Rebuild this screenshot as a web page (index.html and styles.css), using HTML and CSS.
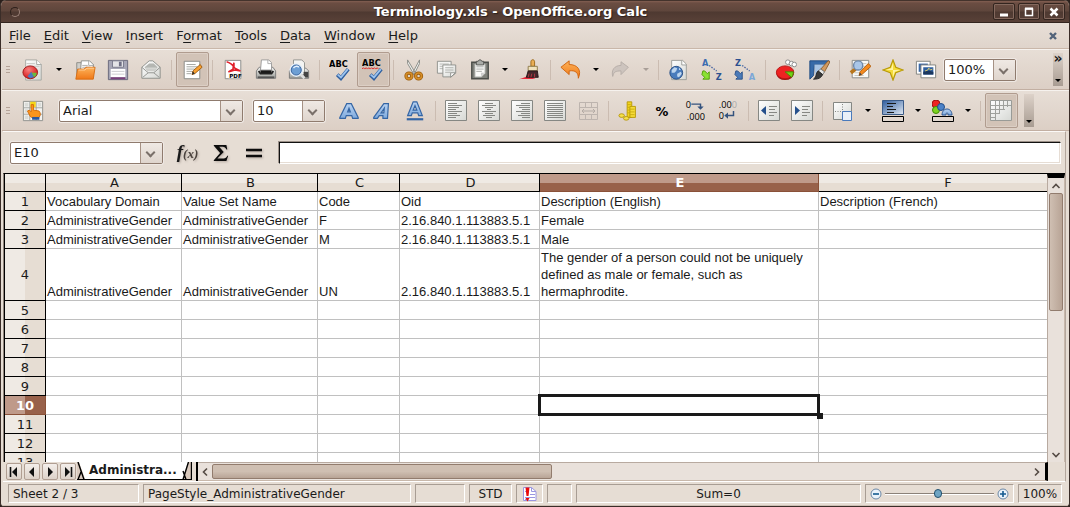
FILE: index.html
```html
<!DOCTYPE html>
<html lang="en">
<head>
<meta charset="utf-8">
<title>Terminology.xls - OpenOffice.org Calc</title>
<link rel="stylesheet" href="styles.css">
</head>
<body>
<svg class="defs" aria-hidden="true">
  <defs>
    <linearGradient id="paper" x1="0" y1="0" x2="1" y2="1"><stop offset="0" stop-color="#ffffff"/><stop offset="1" stop-color="#d6d8d4"/></linearGradient>
    <linearGradient id="blue" x1="0" y1="0" x2="0" y2="1"><stop offset="0" stop-color="#b9d3f2"/><stop offset="1" stop-color="#7faadd"/></linearGradient>
    <linearGradient id="orange" x1="0" y1="0" x2="0" y2="1"><stop offset="0" stop-color="#fdb35a"/><stop offset="1" stop-color="#f07818"/></linearGradient>
    <linearGradient id="navy" x1="0" y1="0" x2="1" y2="1"><stop offset="0" stop-color="#2c5a9c"/><stop offset="1" stop-color="#e4ecf5"/></linearGradient>
    <linearGradient id="metal" x1="0" y1="0" x2="0" y2="1"><stop offset="0" stop-color="#f4f4f2"/><stop offset="1" stop-color="#9a9c98"/></linearGradient>
    <radialGradient id="red" cx=".4" cy=".3" r=".7"><stop offset="0" stop-color="#f98080"/><stop offset="1" stop-color="#d31616"/></radialGradient>
  </defs>
</svg>
<div class="window">
  <header class="titlebar">
    <button class="winmenu" aria-label="Window menu"></button>
    <h1>Terminology.xls - OpenOffice.org Calc</h1>
    <div class="winbuttons">
      <button aria-label="Minimize"><svg width="12" height="12"><path d="M2 9h8" stroke="#fff" stroke-width="3"/></svg></button>
      <button aria-label="Maximize"><svg width="12" height="12"><path d="M2.500 3h7v6.500h-7z" fill="none" stroke="#fff" stroke-width="1.500"/><path d="M2 2.500h8" stroke="#fff" stroke-width="2"/></svg></button>
      <button aria-label="Close"><svg width="12" height="12"><path d="M2.500 2.500l7 7m0-7l-7 7" stroke="#fff" stroke-width="2.500"/></svg></button>
    </div>
  </header>

  <nav class="menubar">
    <button><u>F</u>ile</button><button><u>E</u>dit</button><button><u>V</u>iew</button><button><u>I</u>nsert</button><button>F<u>o</u>rmat</button><button><u>T</u>ools</button><button><u>D</u>ata</button><button><u>W</u>indow</button><button><u>H</u>elp</button>
    <button class="closedoc" aria-label="Close document"><svg width="10" height="10"><path d="M2 2l6 6m0-6l-6 6" stroke="#52637a" stroke-width="2.400"/></svg></button>
  </nav>

  <div class="toolbar standard" role="toolbar" aria-label="Standard">
    <span class="grip"></span>
    <button class="tool" aria-label="New"><svg class="ic" viewBox="0 0 24 24"><path d="M4 1h12l5 5v17H4z" fill="url(#paper)" stroke="#a4a6a2"/><path d="M16 1v5h5" fill="#fff" stroke="#a4a6a2"/><path d="M5 5h9M5 8h14" stroke="#c4c6c2"/><ellipse cx="9" cy="14.500" rx="8" ry="7" fill="url(#red)" stroke="#a01818"/><path d="M10 15h6c0 3-1 4-3 5z" fill="#6cba3c"/><path d="M10 14l3 6-4 1-3-2z" fill="#4a78c0"/></svg></button>
    <button class="drop wide" aria-label="New document type"></button>
    <button class="tool" aria-label="Open"><svg class="ic" viewBox="0 0 24 24"><path d="M3 4h5l1 2h12v15H3z" fill="#cfcfcb" stroke="#8a8a86"/><path d="M8 2h9l4 4v9H7z" fill="#fff" stroke="#8a8c88"/><path d="M16 2v5h5M9 7h6M9 9h9" fill="none" stroke="#a8aaa6"/><path d="M4 11h7l2-2h10l-2 13H2z" fill="url(#orange)" stroke="#d86c12"/><path d="M5 12h7l2-2h8" fill="none" stroke="#ffd09a"/></svg></button>
    <button class="tool" aria-label="Save"><svg class="ic" viewBox="0 0 24 24"><path d="M1.500 1.500h21v21h-21z" fill="#a6a6b6" stroke="#666678"/><path d="M4 11h16v9H4z" fill="#fff"/><path d="M5 13.500h14M5 16.500h14" stroke="#c8c8cc"/><path d="M6 2h12v7H6z" fill="#e4e4e8" stroke="#77778a"/><path d="M13 3h3v5h-3z" fill="#6e6e84"/><path d="M4 20h16v2H4z" fill="#79407a"/></svg></button>
    <button class="tool" aria-label="Document as E-mail"><svg class="ic" viewBox="0 0 24 24"><path d="M2 9l8-7h4l8 7v12H2z" fill="url(#paper)" stroke="#8a8c88"/><path d="M5 9l5-4h5l4 4-3 4H8z" fill="#b4b6b2"/><path d="M2 9l7 6h6l7-6M3 20l6-5m12 5l-6-5" fill="none" stroke="#8f918d"/><path d="M6 10h12M7 12h10" stroke="#e9e9e7"/></svg></button>
    <span class="sep"></span>
    <button class="tool pressed" aria-label="Edit File"><svg class="ic" viewBox="0 0 24 24"><path d="M3.500 2.500h17v19h-17z" fill="#fff" stroke="#858783"/><path d="M6 6h10M6 8.500h12M6 11h9M6 13.500h6M6 16h5" stroke="#a0a29e"/><path d="M12 17l1-4 8-7 2 3-8 7z" fill="#f8a030" stroke="#9c5b10"/><path d="M12 17l1-4 2 3z" fill="#333"/></svg></button>
    <span class="sep"></span>
    <button class="tool" aria-label="Export as PDF"><svg class="ic" viewBox="0 0 24 24"><path d="M3.500 1.500h17v20h-17z" fill="#fff" stroke="#858783"/><path d="M5 3c4 1 7 4 9 7l6 3-6-1-7 2 5-3 1-7 0 6" fill="none" stroke="#e0202a" stroke-width="1.800"/><path d="M7 15h13v6H7z" fill="#f6f6f4"/><text x="8" y="21" font-size="6" font-weight="700">PDF</text></svg></button>
    <button class="tool" aria-label="Print"><svg class="ic" viewBox="0 0 24 24"><path d="M1.500 13l3-4h15l3 4v8h-21z" fill="url(#metal)" stroke="#777"/><path d="M6 10h12v6H6z" fill="#181818"/><path d="M7 1h8l3 3v8H6z" fill="#fff" stroke="#999"/><path d="M14 1v4h4" fill="none" stroke="#aaa"/><path d="M4 13l2 3h12l2-3" fill="none" stroke="#222" stroke-width="2"/><path d="M3 20h18" stroke="#555" stroke-width="2"/></svg></button>
    <button class="tool" aria-label="Page Preview"><svg class="ic" viewBox="0 0 24 24"><path d="M1.500 13l3-3h15l3 3v8h-21z" fill="url(#metal)" stroke="#777"/><path d="M6 1h9l3 3v13H6z" fill="#f4f4f2" stroke="#8e908c"/><path d="M17 14h5v6h-5z" fill="#444"/><circle cx="9" cy="12" r="6.500" fill="#a9cbea" stroke="#e4eef8" stroke-width="2"/><circle cx="9" cy="12" r="5.500" fill="#6d9fd4" stroke="#37609a"/><path d="M6 10c1-2 4-3 6-1" fill="none" stroke="#e6f2ff" stroke-width="1.500"/><path d="M14 17l4 4" stroke="#ddd" stroke-width="3"/></svg></button>
    <span class="sep"></span>
    <button class="tool" aria-label="Spellcheck"><svg class="ic" viewBox="0 0 24 24"><text x="0" y="9" font-size="9" font-weight="700">ABC</text><path d="M9 17l4 4 8-10" fill="none" stroke="#2f5f9f" stroke-width="4"/><path d="M9.500 17l3.500 3 7.500-9" fill="none" stroke="#9cc3ee" stroke-width="2"/></svg></button>
    <button class="tool pressed" aria-label="AutoSpellcheck"><svg class="ic" viewBox="0 0 24 24"><text x="0" y="8" font-size="9" font-weight="700">ABC</text><path d="M0 11l1.500-1.500L3 11l1.500-1.500L6 11l1.500-1.500L9 11l1.500-1.500L12 11l1.500-1.500L15 11l1.500-1.500L18 11" fill="none" stroke="#e02020"/><path d="M9 17l4 4 8-10" fill="none" stroke="#2f5f9f" stroke-width="4"/><path d="M9.500 17l3.500 3 7.500-9" fill="none" stroke="#9cc3ee" stroke-width="2"/></svg></button>
    <span class="sep"></span>
    <button class="tool" aria-label="Cut"><svg class="ic" viewBox="0 0 24 24"><path d="M5 1l9 15-2 1L5 5zM18 1l-8 15 2 1 6-12z" fill="#eceeea" stroke="#888a86"/><ellipse cx="6.500" cy="18.500" rx="3.200" ry="3.200" fill="none" stroke="#9a5c0c" stroke-width="3.600"/><ellipse cx="17" cy="18.500" rx="3.200" ry="3.200" fill="none" stroke="#9a5c0c" stroke-width="3.600"/><circle cx="6.500" cy="18.500" r="3.200" fill="none" stroke="#d58d28" stroke-width="1.800"/><circle cx="17" cy="18.500" r="3.200" fill="none" stroke="#d58d28" stroke-width="1.800"/></svg></button>
    <button class="tool" aria-label="Copy"><svg class="ic" viewBox="0 0 24 24"><path d="M1.500 2.500h15v13h-15z" fill="#f4f4f2" stroke="#8c8e8a"/><path d="M4 5.500h10M4 8h10M4 10.500h5" stroke="#b4b6b2"/><path d="M7.500 6.500h14v9l-5 4h-9z" fill="url(#paper)" stroke="#8c8e8a"/><path d="M10 9.500h9M10 12h9M10 14.500h6" stroke="#adafab"/><path d="M21 15h-5v5z" fill="#fff" stroke="#8c8e8a"/></svg></button>
    <button class="tool" aria-label="Paste"><svg class="ic" viewBox="0 0 24 24"><path d="M3 3.500h18v18H3z" fill="#7f817b" stroke="#4c4e4a" stroke-width="1.500"/><path d="M6.500 5.500h11v10l-4 4h-7z" fill="#fafaf8" stroke="#b6b8b4"/><path d="M8 8.500h8M8 11h8M8 13.500h6" stroke="#a8aaa6"/><path d="M17 15h-4v4z" fill="#ccc"/><path d="M8 2.500h2l1-1.500h2l1 1.500h2v4H8z" fill="#aaaca8" stroke="#555753"/></svg></button>
    <button class="drop" aria-label="Paste options"></button>
    <button class="tool" aria-label="Format Paintbrush"><svg class="ic" viewBox="0 0 24 24"><path d="M0 22c5-1 8-3 11-4l7 3c-6 2-12 0-18 1z" fill="#e92a3c"/><path d="M13 8V3c0-3 4-3 4 0v5z" fill="#e9ae55" stroke="#9a6818"/><path d="M10 8h10v5H10z" fill="#f0e2bc" stroke="#8b7848"/><path d="M10 13h10l1 7H8z" fill="#43262a" stroke="#241416"/><path d="M11 16l-1 4m4-4l-1 4m4-4v4" stroke="#b33943"/></svg></button>
    <span class="sep"></span>
    <button class="tool" aria-label="Undo"><svg class="ic" viewBox="0 0 24 24"><path d="M1 9l9-7v4c9 0 14 6 10 15 0-6-3-9-10-8v4z" fill="url(#orange)" stroke="#cf620c"/></svg></button>
    <button class="drop" aria-label="Undo list"></button>
    <button class="tool" aria-label="Redo" disabled><svg class="ic" viewBox="0 0 24 24"><path d="M20 9l-8-6v4c-7 0-11 5-9 12 1-5 3-6 9-6v4z" fill="#cdc4be" stroke="#b5aca6"/></svg></button>
    <button class="drop" aria-label="Redo list" disabled></button>
    <span class="sep"></span>
    <button class="tool" aria-label="Hyperlink"><svg class="ic" viewBox="0 0 24 24"><path d="M4 1.500h12l4 4v17H4z" fill="url(#paper)" stroke="#999b97"/><path d="M15 1.500v5h5" fill="#fff" stroke="#999b97"/><circle cx="9" cy="15" r="7" fill="#4a7cbc" stroke="#254c82"/><path d="M4 12l3-3 3 1-1 3-2 2-3 0zM10 16l4-2 1 2-3 4-2-1zM12 9l2 3-2 0z" fill="#bdd5ee"/></svg></button>
    <button class="tool" aria-label="Sort Ascending"><svg class="ic" viewBox="0 0 24 24"><text x="1" y="8" font-size="9" font-weight="700" fill="#3c6cb0">A</text><text x="16" y="23" font-size="9" font-weight="700" fill="#2c5090">Z</text><path d="M9 7l8 6" stroke="#3a5a9c" stroke-width="1.400" stroke-dasharray="1.500 1.500"/><path d="M2 13l2 0 3 3 2-2v8H2l2-2-3-3z" fill="#8ae234" stroke="#4e9a06"/></svg></button>
    <button class="tool" aria-label="Sort Descending"><svg class="ic" viewBox="0 0 24 24"><text x="1" y="8" font-size="9" font-weight="700" fill="#2c5090">Z</text><text x="16" y="23" font-size="9" font-weight="700" fill="#7ba7d8">A</text><path d="M9 7l8 6" stroke="#3a5a9c" stroke-width="1.400" stroke-dasharray="1.500 1.500"/><path d="M2 13l2 0 3 3 2-2v8H2l2-2-3-3z" fill="#4a7ab8" stroke="#2a5088"/></svg></button>
    <span class="sep"></span>
    <button class="tool" aria-label="Chart"><svg class="ic" viewBox="0 0 24 24"><ellipse cx="11" cy="16" rx="9.500" ry="7" fill="#9c1010"/><ellipse cx="11" cy="14.500" rx="9.500" ry="7" fill="#ee2222" stroke="#b51414"/><path d="M11 14h9c0 3-1 5-2 6z" fill="#73d216" stroke="#3f8a06"/><circle cx="14" cy="3.500" r="2.500" fill="#fff" stroke="#888"/><circle cx="18" cy="5" r="2.500" fill="#fff" stroke="#888"/><circle cx="21" cy="6" r="2.500" fill="#fff" stroke="#888"/></svg></button>
    <button class="tool" aria-label="Show Draw Functions"><svg class="ic" viewBox="0 0 24 24"><path d="M2 2h21l-3 4H7l-1 12-4 4z" fill="#376aa8" stroke="#1f4a82"/><path d="M7 6h12L8 18z" fill="#a8c4e4"/><path d="M14 11l8-9 2 1-6 11z" fill="#d29a60" stroke="#8a5c2c"/><path d="M11 13l3-2 4 3-2 3z" fill="#e9e9e7" stroke="#777"/><path d="M11 13l5 4c-2 4-5 5-10 5 4-3 2-6 5-9z" fill="#3a3a3a" stroke="#222"/></svg></button>
    <span class="sep"></span>
    <button class="tool" aria-label="Find &amp; Replace"><svg class="ic" viewBox="0 0 24 24"><path d="M3.500 1.500h18v19h-18z" fill="#f8f8f6" stroke="#858783"/><path d="M6 5h13M6 8h13M6 15h8M6 18h10" stroke="#c2c4c0"/><path d="M7 11l-5 4" stroke="#b8761c" stroke-width="4"/><circle cx="10" cy="7" r="5" fill="#a9c6e8" stroke="#6d87a8" stroke-width="1.500"/><path d="M11 18l1-4 9-9 3 3-10 9z" fill="#f58a1e" stroke="#b05c0a"/><path d="M11 18l1-3 2 2z" fill="#444"/></svg></button>
    <button class="tool" aria-label="Navigator"><svg class="ic" viewBox="0 0 24 24"><path d="M12 1l3 8 8 3-8 3-3 8-3-8-8-3 8-3z" fill="#f5dc3c" stroke="#b89a08" stroke-width="1.300"/><path d="M12 4v8l-8 0 6-2zM12 12l8 0-6 2-2 6z" fill="#fff4a0"/></svg></button>
    <button class="tool" aria-label="Gallery"><svg class="ic" viewBox="0 0 24 24"><path d="M1.500 2.500h15v14h-15z" fill="#fff" stroke="#7d7f7b"/><path d="M4 5h10v9H4z" fill="#3a68a6"/><path d="M6.500 6.500h16v14h-16z" fill="#fff" stroke="#7d7f7b"/><path d="M9 9h11v8H9z" fill="#2d5e9e"/><path d="M9 14c4-2 7-1 11 0v3H9z" fill="#1b375e"/><path d="M11 13l3-1 1-2 2 2 2-1" fill="none" stroke="#e8d36a"/></svg></button>
    <span class="combo zoombox"><select aria-label="Zoom"><option>100%</option></select></span>
    <button class="more" aria-label="More standard tools">»</button>
  </div>

  <div class="toolbar formatting" role="toolbar" aria-label="Formatting">
    <span class="grip"></span>
    <button class="tool" aria-label="Styles and Formatting"><svg class="ic" viewBox="0 0 24 24"><path d="M1.500 1.500h21v21h-21z" fill="#f3f3f1" stroke="#8b8d89"/><path d="M8.500 2v20M15.500 2v20M2 8.500h20M2 15.500h20" stroke="#a0a29e"/><path d="M3 3h4v4H3zM3 10h4v4H3zM3 17h4v4H3zM17 3h4v4h-4z" fill="#d9dbd7"/><path d="M9 2h6v6H9z" fill="#f4d616"/><path d="M9 18l-3-6 2-1 2 2V5h2.500v6l6 1c2 2 2 5 0 7h-8z" fill="#fb951f" stroke="#d46a08"/><path d="M11 18.500h8v3h-8z" fill="#2d58a0"/></svg></button>
    <span class="combo fontbox"><select aria-label="Font Name"><option>Arial</option></select></span>
    <span class="combo sizebox"><select aria-label="Font Size"><option>10</option></select></span>
    <button class="tool" aria-label="Bold"><svg class="ic" viewBox="0 0 24 24"><path d="M2 19L9.500 4h5L22 19v1h-6l-1-3H9l-1 3H2zM10.500 13h3L12 9z" fill="url(#blue)" stroke="#3465a4" stroke-width="1.300" fill-rule="evenodd"/></svg></button>
    <button class="tool" aria-label="Italic"><svg class="ic" viewBox="0 0 24 24"><path d="M3 19L14 4h5l-1 16h-5v-3H9l-2 3H3zM11 14h3l.5-5z" fill="url(#blue)" stroke="#3465a4" stroke-width="1.300" fill-rule="evenodd"/></svg></button>
    <button class="tool" aria-label="Underline"><svg class="ic" viewBox="0 0 24 24"><path d="M4 17l6-15h4l6 15h-4l-1-3H9l-1 3zM10 11h4l-2-5z" fill="url(#blue)" stroke="#3465a4" stroke-width="1.300" fill-rule="evenodd"/><path d="M3 21h18" stroke="#3465a4" stroke-width="2.400"/></svg></button>
    <span class="sep"></span>
    <button class="tool" aria-label="Align Left"><svg class="ic" viewBox="1 1 22 22"><path d="M1.500 1.500h21v20h-21z" fill="url(#paper)" stroke="#858783"/><path d="M4 4.500h9M4 6.500h14M4 8.500h11M4 10.500h8M4 12.500h14M4 14.500h9M4 16.500h12M4 18.500h8" stroke="#858783"/></svg></button>
    <button class="tool" aria-label="Align Center Horizontally"><svg class="ic" viewBox="1 1 22 22"><path d="M1.500 1.500h21v20h-21z" fill="url(#paper)" stroke="#858783"/><path d="M8 4.500h8M5 6.500h14M8 8.500h8M10 10.500h4M5 12.500h14M8 14.500h8M6 16.500h12M9 18.500h6" stroke="#858783"/></svg></button>
    <button class="tool" aria-label="Align Right"><svg class="ic" viewBox="1 1 22 22"><path d="M1.500 1.500h21v20h-21z" fill="url(#paper)" stroke="#858783"/><path d="M11 4.500h9M6 6.500h14M9 8.500h11M12 10.500h8M6 12.500h14M11 14.500h9M8 16.500h12M12 18.500h8" stroke="#858783"/></svg></button>
    <button class="tool" aria-label="Justified"><svg class="ic" viewBox="1 1 22 22"><path d="M1.500 1.500h21v20h-21z" fill="url(#paper)" stroke="#858783"/><path d="M4 4.500h16M4 6.500h16M4 8.500h16M4 10.500h16M4 12.500h16M4 14.500h16M4 16.500h16M4 18.500h16" stroke="#858783"/></svg></button>
    <button class="tool" aria-label="Merge Cells" disabled><svg class="ic" viewBox="1 1 22 22"><path d="M3.500 3.500h18v17h-18zM3 8.500h18M3 15.500h18M9.500 3v5.500M15.500 3v5.500M9.500 15.500V20M15.500 15.500V20" fill="none" stroke="#bdb4ae"/><path d="M6 12h13M8 10l-2 2 2 2m9-4l2 2-2 2" fill="none" stroke="#b3aaa4"/></svg></button>
    <span class="sep"></span>
    <button class="tool" aria-label="Currency"><svg class="ic" viewBox="0 0 24 24"><path d="M10 2h5v17h-5z" fill="#f3d41c" stroke="#b79808"/><path d="M13 7h6v12h-6z" fill="#f6dc38" stroke="#b79808"/><path d="M10 5h4M10 8h3M10 11h3M10 14h3M13 10h5M13 13h5M13 16h5" stroke="#c9ac10"/><ellipse cx="4" cy="17" rx="3" ry="2" fill="#f6e04a" stroke="#b79808"/><ellipse cx="9" cy="20" rx="3" ry="2" fill="#f6e04a" stroke="#b79808"/></svg></button>
    <button class="tool" aria-label="Percent"><svg class="ic" viewBox="0 0 24 24"><text x="5" y="17" font-size="14" font-weight="700" font-family="Liberation Sans, sans-serif">%</text></svg></button>
    <button class="tool" aria-label="Add Decimal Place"><svg class="ic" viewBox="0 0 24 24"><text class="narrow" x="2" y="9" font-size="10">0</text><text class="narrow" x="3" y="22" font-size="10">.000</text><path d="M8 4.500h10v3" fill="none" stroke="#34537e" stroke-width="1.600"/><path d="M14.500 7h7L18 10.500z" fill="#34537e"/></svg></button>
    <button class="tool" aria-label="Delete Decimal Place"><svg class="ic" viewBox="0 0 24 24"><text class="narrow" x="2" y="9" font-size="10">.00<tspan fill="#aaa">0</tspan></text><text class="narrow" x="2" y="21" font-size="10">0</text><path d="M18 12v5H10" fill="none" stroke="#34537e" stroke-width="1.600"/><path d="M12 13.500v7L8 17z" fill="#34537e"/></svg></button>
    <span class="sep"></span>
    <button class="tool" aria-label="Decrease Indent"><svg class="ic" viewBox="1 1 22 22"><path d="M1.500 1.500h21v20h-21z" fill="url(#paper)" stroke="#858783"/><path d="M9 7v9l-5-4.500z" fill="#24508c"/><path d="M12 7.500h8M12 10.500h6M12 13.500h8M12 16.500h5" stroke="#858783"/></svg></button>
    <button class="tool" aria-label="Increase Indent"><svg class="ic" viewBox="1 1 22 22"><path d="M1.500 1.500h21v20h-21z" fill="url(#paper)" stroke="#858783"/><path d="M5 7v9l5-4.500z" fill="#24508c"/><path d="M12 7.500h8M12 10.500h6M12 13.500h8M12 16.500h5" stroke="#858783"/></svg></button>
    <span class="sep"></span>
    <button class="tool" aria-label="Borders"><svg class="ic" viewBox="1 1 22 22"><path d="M2.500 3.500h18v17h-18z" fill="url(#paper)" stroke="#858783"/><path d="M11.500 5v8M4 12.500h8" stroke="#858783" stroke-dasharray="1 1.500"/><path d="M11.500 12.500h9v9h-9z" fill="#e9f0f8" stroke="#4a7abc"/></svg></button>
    <button class="drop" aria-label="Border style"></button>
    <button class="tool" aria-label="Background Color"><svg class="ic" viewBox="1 1 22 22"><path d="M1.500 1.500h21v14h-21z" fill="url(#navy)" stroke="#3a5a86"/><path d="M6 4.500h9M6 7.500h6M6 10.500h9M6 13.500h7" stroke="#181818"/><path d="M1.500 17.500h21v5h-21z" fill="#e1d7cf" stroke="#000"/></svg></button>
    <button class="drop" aria-label="Background colors"></button>
    <button class="tool" aria-label="Font Color"><svg class="ic" viewBox="1 1 22 22"><circle cx="5" cy="5" r="4" fill="#ee2323" stroke="#a01010"/><circle cx="5" cy="11" r="3.500" fill="#7ed321" stroke="#3f8a06"/><circle cx="10" cy="8" r="3.500" fill="#4c82c8" stroke="#234f8a"/><path d="M11 16c0-8 10-8 10 0h-4c0-3-2-3-2 0z" fill="url(#blue)" stroke="#2a5794"/><path d="M1.500 17.500h21v5h-21z" fill="#e1d7cf" stroke="#000"/></svg></button>
    <button class="drop" aria-label="Font colors"></button>
    <span class="sep"></span>
    <button class="tool pressed" aria-label="Gridlines for Current Sheet"><svg class="ic" viewBox="1 1 22 22"><path d="M1.500 1.500h21v20h-21z" fill="url(#paper)" stroke="#999b97"/><path d="M2 6.500h20M2 10.500h14M2 14.500h8M2 18.500h4M6.500 2v19M10.500 2v13M14.500 2v9M18.500 2v6" stroke="#9fa19d"/></svg></button>
    <button class="more short" aria-label="More formatting tools"></button>
  </div>

  <main class="document">
    <div class="formulabar">
      <span class="combo namebox"><select aria-label="Name Box"><option>E10</option></select></span>
      <button class="fn fx" aria-label="Function Wizard"><b>f</b><i>(x)</i></button>
      <button class="fn" aria-label="Sum"><svg width="18" height="18" viewBox="0 0 20 20"><path d="M2 1h14l1 5h-1c-1-2-2-3-4-3H8l5 6-7 7h7c2 0 3-1 4-3h1l-2 6H2v-1l7-8-7-8z" fill="#0c0c0c"/></svg></button>
      <button class="fn" aria-label="Function"><svg width="20" height="20" viewBox="0 0 20 20"><path d="M2 7h16M2 13h16" stroke="#0c0c0c" stroke-width="2.400"/></svg></button>
      <input class="formula" type="text" aria-label="Input line">
    </div>

    <div class="sheet">
      <div class="cells">
        <table>
          <colgroup><col class="rh"><col class="ca"><col class="cb"><col class="cc"><col class="cd"><col class="ce"><col></colgroup>
          <thead><tr><th class="corner"></th><th>A</th><th>B</th><th>C</th><th>D</th><th class="on">E</th><th class="last">F</th></tr></thead>
          <tbody>
            <tr><th>1</th><td>Vocabulary Domain</td><td>Value Set Name</td><td>Code</td><td>Oid</td><td>Description (English)</td><td>Description (French)</td></tr>
            <tr><th>2</th><td>AdministrativeGender</td><td>AdministrativeGender</td><td>F</td><td>2.16.840.1.113883.5.1</td><td>Female</td><td></td></tr>
            <tr><th>3</th><td>AdministrativeGender</td><td>AdministrativeGender</td><td>M</td><td>2.16.840.1.113883.5.1</td><td>Male</td><td></td></tr>
            <tr class="tall"><th>4</th><td>AdministrativeGender</td><td>AdministrativeGender</td><td>UN</td><td>2.16.840.1.113883.5.1</td><td class="wrap">The gender of a person could not be uniquely defined as male or female, such as hermaphrodite.</td><td></td></tr>
            <tr><th>5</th><td></td><td></td><td></td><td></td><td></td><td></td></tr>
            <tr><th>6</th><td></td><td></td><td></td><td></td><td></td><td></td></tr>
            <tr><th>7</th><td></td><td></td><td></td><td></td><td></td><td></td></tr>
            <tr><th>8</th><td></td><td></td><td></td><td></td><td></td><td></td></tr>
            <tr><th>9</th><td></td><td></td><td></td><td></td><td></td><td></td></tr>
            <tr><th class="on">10</th><td></td><td></td><td></td><td></td><td class="cursor"></td><td></td></tr>
            <tr><th>11</th><td></td><td></td><td></td><td></td><td></td><td></td></tr>
            <tr><th>12</th><td></td><td></td><td></td><td></td><td></td><td></td></tr>
            <tr><th>13</th><td></td><td></td><td></td><td></td><td></td><td></td></tr>
          </tbody>
        </table>
      </div>
      <div class="vscroll">
        <button aria-label="Scroll up"><svg width="10" height="8"><path d="M1.500 6L5 2.500 8.500 6" fill="none" stroke="#554b45" stroke-width="1.600"/></svg></button>
        <span class="thumb"></span>
        <button class="end" aria-label="Scroll down"><svg width="10" height="8"><path d="M1.500 2L5 5.500 8.500 2" fill="none" stroke="#554b45" stroke-width="1.600"/></svg></button>
      </div>
    </div>

    <div class="tabrow">
      <div class="sheetnav">
        <button aria-label="First sheet"><svg width="12" height="12"><path d="M2.500 1v10" stroke="#111" stroke-width="1.600"/><path d="M9 1v10L4 6z" fill="#111"/></svg></button>
        <button aria-label="Previous sheet"><svg width="12" height="12"><path d="M8 1v10L3 6z" fill="#111"/></svg></button>
        <button aria-label="Next sheet"><svg width="12" height="12"><path d="M4 1v10l5-5z" fill="#111"/></svg></button>
        <button aria-label="Last sheet"><svg width="12" height="12"><path d="M3 1v10l5-5z" fill="#111"/><path d="M9.500 1v10" stroke="#111" stroke-width="1.600"/></svg></button>
      </div>
      <button class="tab"><svg width="8" height="18"><path d="M0 0h2l6 17H0z" fill="#d9c9bd"/><path d="M1 0l6 17.500M1 17.500L4 10" fill="none" stroke="#000" stroke-width="1.400"/></svg><span>Administra...</span><svg width="10" height="18"><path d="M10 0H6L1 17h9z" fill="#d9c9bd"/><path d="M6.500 0L1 17.500M9.500 0v17.500M1 9l3 8.500" fill="none" stroke="#000" stroke-width="1.400"/></svg></button>
      <span class="splitter"></span>
      <div class="hscroll">
        <button aria-label="Scroll left"><svg width="8" height="10"><path d="M6 1.500L2.500 5 6 8.500" fill="none" stroke="#554b45" stroke-width="1.600"/></svg></button>
        <span class="thumb"></span>
        <button class="end" aria-label="Scroll right"><svg width="8" height="10"><path d="M2 1.500L5.500 5 2 8.500" fill="none" stroke="#554b45" stroke-width="1.600"/></svg></button>
      </div>
    </div>
  </main>

  <footer class="status">
    <span class="f1">Sheet 2 / 3</span>
    <span class="f2">PageStyle_AdministrativeGender</span>
    <span class="f3"></span>
    <span class="f4">STD</span>
    <span class="f5"><svg width="16" height="16"><path d="M1.500 1.500h8l4.500 4v9H1.500z" fill="#fff" stroke="#9a96e0"/><path d="M9.500 1.500v4H14M8 8.500h5M3 11.500h10M3 13.500h3M3 5.500h3" fill="none" stroke="#9a96e0"/><path d="M3.500 1.500h4L6.500 10h-2z" fill="#e80c0c"/><path d="M3.500 12h4l-2 3.500z" fill="#e80c0c"/></svg></span>
    <span class="f6"></span>
    <span class="f7">Sum=0</span>
    <span class="f8">
      <button aria-label="Zoom out"><svg width="12" height="12"><circle cx="6" cy="6" r="5" fill="#eaf2fa" stroke="#6c88a6"/><path d="M3 6h6" stroke="#145a90" stroke-width="1.600"/></svg></button>
      <input type="range" min="0" max="100" value="49" aria-label="Zoom level">
      <button aria-label="Zoom in"><svg width="12" height="12"><circle cx="6" cy="6" r="5" fill="#eaf2fa" stroke="#6c88a6"/><path d="M3 6h6M6 3v6" stroke="#145a90" stroke-width="1.600"/></svg></button>
    </span>
    <span class="f9">100%</span>
  </footer>
</div>
</body>
</html>
```
FILE: styles.css
```css
* { box-sizing: border-box; }

body {
  margin: 0;
  background: #2b201c;
  color: #1a1a1a;
  font: 13px/16px "DejaVu Sans", sans-serif;
}

button {
  margin: 0;
  padding: 0;
  border: 0;
  background: none;
  color: inherit;
  font: inherit;
}

svg { display: block; }
svg text { font-family: "DejaVu Sans", sans-serif; }
svg .narrow { font-family: "Open Sans", sans-serif; }
.defs { position: absolute; width: 0; height: 0; }

.window {
  display: flex;
  flex-direction: column;
  height: 100vh;
  overflow: hidden;
  border: 1px solid #3a2d28;
  border-top: 0;
  border-radius: 6px 6px 4px 4px;
  background: #e6ddd4;
}

/* Title bar */
.titlebar {
  display: flex;
  align-items: center;
  flex: none;
  height: 23px;
  padding: 0 4px 0 9px;
  border-top: 1px solid #44332c;
  border-bottom: 1px solid #33251f;
  background: linear-gradient(#835f52, #6b4d42 2px, #5f463c 10px, #4e3931 11px, #594138);
}
.titlebar h1 {
  flex: 1;
  margin: 0;
  padding-left: 8px;
  color: #fff;
  font-size: 13px;
  text-align: center;
  text-shadow: 1px 1px 1px #2b1e19;
}
.winmenu {
  width: 10px;
  height: 10px;
  border: 1px solid #2e211c;
  border-right-color: #9a8278;
  border-bottom-color: #9a8278;
  border-radius: 50%;
}
.winbuttons { display: flex; gap: 3px; }
.winbuttons button {
  display: grid;
  place-items: center;
  width: 22px;
  height: 17px;
  border: 1px solid #33251f;
  border-radius: 2px;
  box-shadow: inset 0 0 0 1px #84695e;
}

/* Menu bar */
.menubar {
  display: flex;
  align-items: center;
  gap: 13px;
  flex: none;
  height: 26px;
  padding: 0 11px 0 8px;
  border-bottom: 1px solid #c9b7a9;
  background: linear-gradient(#e8dfd7, #dfd4cb);
}
.menubar u { text-underline-offset: 2px; }
.closedoc { margin-left: auto; }

/* Toolbars */
.toolbar {
  display: flex;
  align-items: center;
  flex: none;
  height: 41px;
  margin-left: 1px;
  padding-right: 6px;
  border-top: 1px solid #f6f2ee;
  border-bottom: 1px solid #c2afa2;
  background: linear-gradient(#e7ded6, #dccfc5);
}
.grip {
  width: 15px;
  height: 8px;
  background: repeating-linear-gradient(#b5a398 0 1px, transparent 1px 3px) 4px 0 / 4px 8px no-repeat;
}
.tool {
  display: grid;
  place-items: center;
  flex: none;
  width: 33px;
  height: 35px;
  padding-right: 1px;
}
.ic { width: 22px; height: 22px; }
.pressed {
  border: 1px solid #b09c8f;
  border-radius: 2px;
  background: #d2c3b7;
  box-shadow: inset 0 0 0 1px #dccfc5;
}
.sep {
  flex: none;
  width: 8px;
  height: 20px;
  background: linear-gradient(#cbbcb1, #cbbcb1) 3px 0 / 1px 20px no-repeat;
}
.drop {
  display: grid;
  place-items: center;
  flex: none;
  width: 17px;
  height: 35px;
  padding-right: 1px;
}
.wide { width: 19px; }
.drop::before, .more::after {
  content: "";
  border: 3px solid transparent;
  border-top-color: #000;
  border-bottom: 0;
}
.drop:disabled::before { border-top-color: #a89e97; }
.more {
  display: flex;
  flex-direction: column;
  align-items: center;
  justify-content: space-between;
  width: 10px;
  height: 33px;
  margin-left: auto;
  padding-bottom: 4px;
  background: linear-gradient(#ddd2c9, #a89c92);
  font-size: 14px;
  font-weight: 700;
  line-height: 10px;
}
.short { justify-content: flex-end; margin-left: 6px; }

/* Drop-down fields */
.combo {
  position: relative;
  flex: none;
  height: 22px;
  border: 1px solid #8f7b6e;
  border-radius: 2px;
  background: #fff;
  box-shadow: 0 0 0 1px #efe9e4;
}
.combo select {
  width: 100%;
  height: 20px;
  padding: 0 3px;
  border: 0;
  background: none;
  color: inherit;
  font: inherit;
  appearance: none;
}
.combo::after {
  content: "";
  position: absolute;
  top: 0;
  right: 0;
  bottom: 0;
  width: 21px;
  border-left: 1px solid #a59184;
  background: linear-gradient(#efe9e4, #dfd5cd);
  pointer-events: none;
}
.combo::before {
  content: "";
  position: absolute;
  z-index: 1;
  top: 6px;
  right: 8px;
  width: 5px;
  height: 5px;
  border: solid #7a706a;
  border-width: 0 2px 2px 0;
  transform: rotate(45deg);
  pointer-events: none;
}
.zoombox { width: 72px; margin-left: 1px; }
.fontbox { width: 184px; margin-left: 9px; }
.sizebox { width: 72px; margin: 0 8px 0 10px; }

/* Document area */
.document {
  display: flex;
  flex-direction: column;
  flex: 1;
  min-height: 0;
  margin: 0 3px 0 2px;
  border-top: 1px solid #fbf9f7;
  border-right: 1px solid #b3a69c;
  border-bottom: 1px solid #fff;
}
.formulabar {
  display: flex;
  align-items: center;
  flex: none;
  height: 41px;
  padding: 0 4px 0 7px;
}
.namebox { width: 153px; margin-right: 8px; }
.fn {
  display: grid;
  place-items: center;
  width: 33px;
  filter: drop-shadow(1px 1px 1px #b5aaa2);
}
.fx {
  display: flex;
  align-items: baseline;
  justify-content: center;
  font-family: "Liberation Serif", serif;
  font-style: italic;
}
.fx b { font-size: 19px; }
.fx i { color: #4a423d; font-size: 13px; font-weight: 700; }
.formula {
  flex: 1;
  height: 22px;
  margin-left: 9px;
  padding: 0 4px;
  border: 1px solid #fff;
  border-top-color: #111;
  border-left-color: #111;
  border-radius: 0;
  outline: 1px solid transparent;
  background: #fff;
  box-shadow: inset -1px -1px 0 #e6ddd4, -1px -1px 0 #9b9088;
  font: inherit;
}

.sheet {
  display: flex;
  flex: 1;
  min-height: 0;
  border-top: 1px solid #000;
  border-left: 1px solid #8f847b;
}
.cells {
  flex: 1;
  min-width: 0;
  overflow: hidden;
  border-left: 1px solid #000;
  background: #fff;
}
table {
  width: calc(100% + 28px);
  border-collapse: separate;
  border-spacing: 0;
  table-layout: fixed;
}
.rh { width: 41px; }
.ca, .cb { width: 136px; }
.cc { width: 82px; }
.cd { width: 140px; }
.ce { width: 279px; }
tr { height: 19px; }
thead tr { height: 18px; }
.tall { height: 52px; }
th, td {
  padding: 0;
  border-right: 1px solid #c0c0c0;
  border-bottom: 1px solid #c0c0c0;
}
th {
  border-color: #000;
  background: linear-gradient(90deg, #efeae4 20px, #e6ddd3 20px);
  font-weight: 400;
  line-height: 16px;
}
tbody th { padding-top: 1px; }
thead th { padding-left: 2px; background: linear-gradient(#efeae4 9px, #e6ddd3 9px); }
.on {
  border-color: #8a5138;
  background: linear-gradient(90deg, #bf9a8a 20px, #98614a 20px);
  color: #fff;
  font-weight: 700;
}
thead .on { background: linear-gradient(#bf9a8a 9px, #98614a 9px); }
.last { border-right: 0; }
td {
  padding: 0 0 0 1px;
  font-family: "Liberation Sans", sans-serif;
  vertical-align: bottom;
  white-space: nowrap;
}
.wrap { line-height: 17px; white-space: normal; }
.cursor { position: relative; }
.cursor::before {
  content: "";
  position: absolute;
  inset: -2px;
  border: 3px solid #1a1a1a;
}
.cursor::after {
  content: "";
  position: absolute;
  right: -5px;
  bottom: -5px;
  width: 6px;
  height: 6px;
  background: #1a1a1a;
}

/* Scroll bars */
.vscroll {
  display: flex;
  flex-direction: column;
  width: 18px;
  border-top: 4px solid #000;
  border-left: 1px solid #b8aaa0;
  border-right: 1px solid #c8b8ab;
  background: #e9e1db;
}
.vscroll button { display: grid; place-items: center; height: 15px; }
.vscroll .thumb {
  height: 118px;
  margin: 0 1px;
  border: 1px solid #927c6e;
  border-radius: 2px;
  background: linear-gradient(90deg, #cfbfb2, #b8a496);
}
.vscroll .end { margin-top: auto; }

.tabrow {
  display: flex;
  flex: none;
  height: 19px;
  padding-right: 17px;
}
.sheetnav { display: flex; gap: 2px; padding: 1px 0 1px 3px; }
.sheetnav button {
  display: grid;
  place-items: center;
  width: 16px;
  border: 1px solid #b09e92;
  border-radius: 2px;
  background: linear-gradient(#f3eeea, #ddd2c9);
}
.tab {
  display: flex;
  height: 18px;
  margin-left: 1px;
  border-bottom: 1px solid #000;
  background: #fff;
  font-size: 12px;
  font-weight: 700;
  line-height: 17px;
}
.tab span { padding: 0 5px 0 4px; }
.splitter { width: 6px; border-right: 2px solid #000; }
.hscroll {
  display: flex;
  flex: 1;
  padding: 1px 0;
  border-right: 3px solid #000;
  border-top: 1px solid #b8aaa0;
  border-bottom: 1px solid #c8b8ab;
  background: #e9e1db;
}
.hscroll button { display: grid; place-items: center; width: 14px; }
.hscroll .thumb {
  width: 340px;
  border: 1px solid #927c6e;
  border-radius: 2px;
  background: linear-gradient(#cfbfb2 50%, #b8a496);
}
.hscroll .end { width: 16px; margin-left: auto; }

/* Status bar */
.status {
  display: flex;
  gap: 4px;
  flex: none;
  padding: 2px 7px;
  border-bottom: 1px solid #cdbfb4;
}
.status > span {
  display: flex;
  align-items: center;
  justify-content: center;
  height: 19px;
  border: 1px solid #fff;
  border-top-color: #a89d94;
  border-left-color: #a89d94;
  font-size: 12px;
}
.status > .f1, .status > .f2 { justify-content: flex-start; padding-left: 4px; }
.status .f1 { width: 131px; }
.status .f2 { width: 268px; }
.status .f3 { width: 50px; }
.status .f4 { width: 43px; }
.status .f5 { width: 27px; }
.status .f6 { width: 25px; }
.status .f7 { flex: 1; }
.status .f8 { width: 149px; gap: 3px; }
.status .f9 { width: 44px; }
input[type="range"] {
  width: 109px;
  height: 14px;
  margin: 0;
  background: linear-gradient(#8b8178 50%, #fff 50%) 0 6px / 100% 2px no-repeat;
  appearance: none;
}
input[type="range"]::-webkit-slider-thumb {
  width: 8px;
  height: 9px;
  border: 1px solid #23506e;
  border-radius: 4px;
  background: #6fa5c4;
  appearance: none;
}
```
